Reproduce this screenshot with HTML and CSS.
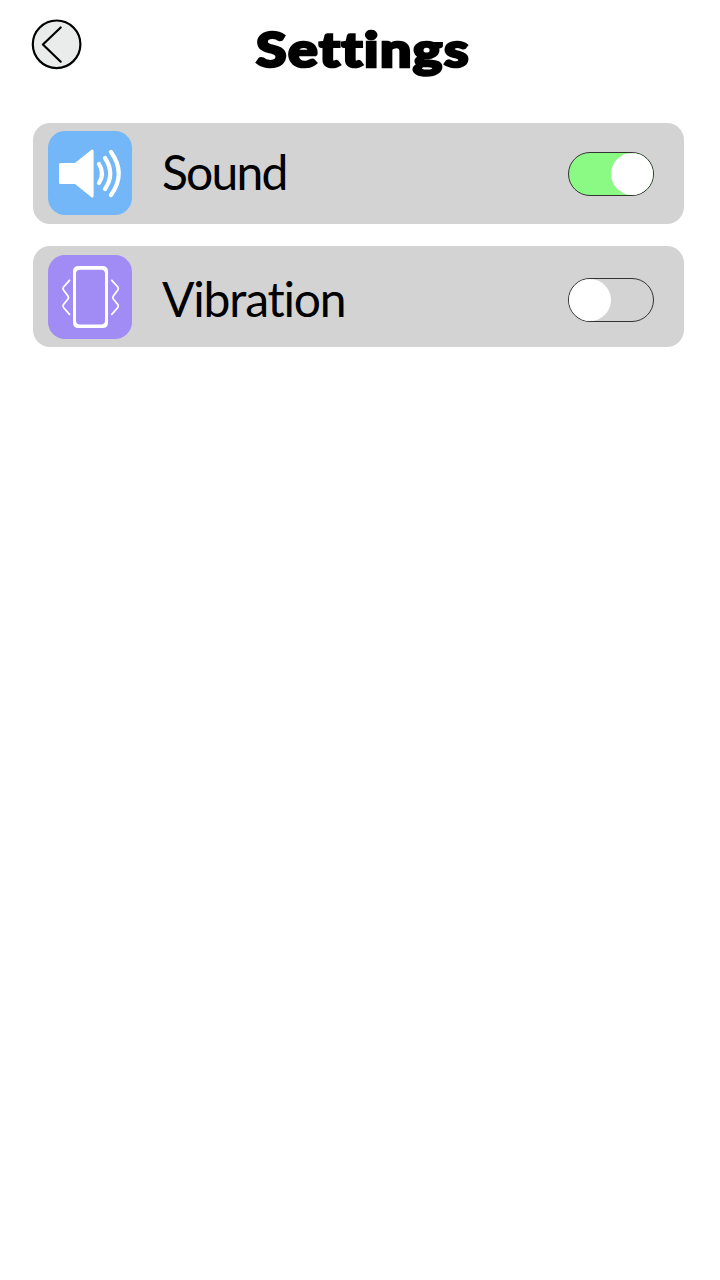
FILE: index.html
```html
<!DOCTYPE html>
<html lang="en">
<head>
<meta charset="utf-8">
<title>Settings</title>
<link rel="stylesheet" href="styles.css">
</head>
<body>
<header class="header">
  <button class="back" aria-label="Back">
    <svg width="52" height="52" viewBox="0 0 52 52" fill="none" stroke="#000">
      <circle cx="25.6" cy="26.3" r="23.8" fill="#e9ecea" stroke-width="2.2"/>
      <path d="M29.7 9.5 11.9 26.5 29.7 43.7" stroke-width="2.2" stroke-linecap="round" stroke-linejoin="round"/>
    </svg>
  </button>
  <h1 class="title">Settings</h1>
</header>
<main class="list">
  <section class="row">
    <svg class="icon icon-sound" viewBox="0 0 84 84">
      <path d="M12.5 32H27L43.5 18.8Q45.6 17.7 45.6 20V65Q45.6 67.3 43.5 66.2L27 53H12.5Q11 53 11 51.5V33.5Q11 32 12.5 32Z" fill="#fff"/>
      <g fill="none" stroke="#fff" stroke-width="4.2" stroke-linecap="round">
        <path d="M51 33Q57 42.5 51 52"/>
        <path d="M57 27Q67.5 42.5 57 58"/>
        <path d="M63 21Q78.5 42.5 63 64"/>
      </g>
    </svg>
    <span class="label label-sound">Sound</span>
    <span class="toggle toggle-on" role="switch" aria-checked="true"><span class="knob"></span></span>
  </section>
  <section class="row row-vibration">
    <svg class="icon icon-vibration" viewBox="0 0 84 84">
      <path fill="#fff" fill-rule="evenodd" d="M30.5 11H54.5Q60 11 60 16.500V67.500Q60 73 54.500 73H30.500Q25 73 25 67.500V16.500Q25 11 30.500 11ZM32 14.700Q28 14.700 28 18.700V65.500Q28 69.500 32 69.500H53Q57 69.500 57 65.500V18.700Q57 14.700 53 14.700Z"/>
      <g fill="none" stroke="#fff" stroke-width="1.8" stroke-linecap="round" stroke-linejoin="round">
        <path d="M21.500 25.300 15.500 32Q14.500 33.500 15.500 35L20 41Q21 42.500 20 44L15.500 49.500Q14.500 51 15.500 52.500L21.500 59.300"/>
        <path d="M63.800 25.300 69.800 32Q70.800 33.500 69.800 35L65.300 41Q64.300 42.500 65.300 44L69.800 49.500Q70.800 51 69.800 52.500L63.800 59.300"/>
      </g>
    </svg>
    <span class="label label-vibration">Vibration</span>
    <span class="toggle" role="switch" aria-checked="false"><span class="knob"></span></span>
  </section>
</main>
</body>
</html>
```
FILE: styles.css
```css
* {
  box-sizing: border-box;
}

body {
  margin: 0;
  min-height: 1280px;
  background: #fff;
  color: #000;
  font-family: Lato, "Open Sans", sans-serif;
}

.header {
  display: flex;
  align-items: flex-start;
  height: 123px;
  padding: 18px 31px 0;
}

.back {
  width: 52px;
  height: 52px;
  padding: 0;
  border: 0;
  background: none;
}

.back svg {
  display: block;
}

.title {
  margin: 1px 0 0 173px;
  font-size: 47px;
  line-height: 60px;
  font-weight: 900;
  letter-spacing: 1.3px;
  -webkit-text-stroke: 2.6px #000;
  transform: scaleX(1.18);
  transform-origin: left;
}

.list {
  display: flex;
  flex-direction: column;
  gap: 22px;
  padding: 0 36px 0 33px;
}

.row {
  display: flex;
  align-items: flex-start;
  height: 101px;
  padding: 8px 30px 0 15px;
  border-radius: 17px;
  background: #d3d3d3;
}

.row-vibration {
  padding-top: 9px;
}

.icon {
  flex: none;
  width: 84px;
  height: 84px;
  border-radius: 17px;
}

.icon-sound {
  background: #73b7f8;
}

.icon-vibration {
  background: #a18bf5;
}

.label {
  flex: 1;
  padding-left: 30px;
  font-size: 48px;
  line-height: 82px;
}

.label-sound {
  letter-spacing: -1.8px;
}

.label-vibration {
  padding-top: 3px;
  letter-spacing: -1.2px;
}

.toggle {
  display: flex;
  width: 86px;
  height: 44px;
  margin-top: 21px;
  border: 1px solid #333;
  border-radius: 22px;
}

.row-vibration .toggle {
  margin-top: 23px;
}

.toggle-on {
  justify-content: flex-end;
  background: #8bfa84;
}

.knob {
  width: 42px;
  height: 42px;
  border-radius: 50%;
  background: #fff;
}
```
